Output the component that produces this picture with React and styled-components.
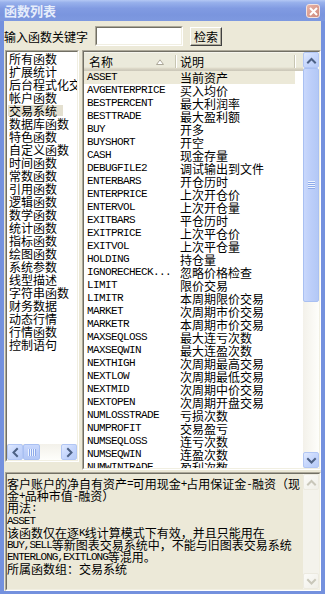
import React from 'react';
import styled, { createGlobalStyle } from 'styled-components';

const categories = [
  '所有函数', '扩展统计', '后台程式化交易', '帐户函数', '交易系统', '数据库函数', '特色函数',
  '自定义函数', '时间函数', '常数函数', '引用函数', '逻辑函数', '数学函数', '统计函数',
  '指标函数', '绘图函数', '系统参数', '线型描述', '字符串函数', '财务数据', '动态行情',
  '行情函数', '控制语句'
];

const functions = [
  ['ASSET', '当前资产'],
  ['AVGENTERPRICE', '买入均价'],
  ['BESTPERCENT', '最大利润率'],
  ['BESTTRADE', '最大盈利额'],
  ['BUY', '开多'],
  ['BUYSHORT', '开空'],
  ['CASH', '现金存量'],
  ['DEBUGFILE2', '调试输出到文件'],
  ['ENTERBARS', '开仓历时'],
  ['ENTERPRICE', '上次开仓价'],
  ['ENTERVOL', '上次开仓量'],
  ['EXITBARS', '平仓历时'],
  ['EXITPRICE', '上次平仓价'],
  ['EXITVOL', '上次平仓量'],
  ['HOLDING', '持仓量'],
  ['IGNORECHECK...', '忽略价格检查'],
  ['LIMIT', '限价交易'],
  ['LIMITR', '本周期限价交易'],
  ['MARKET', '次周期市价交易'],
  ['MARKETR', '本周期市价交易'],
  ['MAXSEQLOSS', '最大连亏次数'],
  ['MAXSEQWIN', '最大连盈次数'],
  ['NEXTHIGH', '次周期最高交易'],
  ['NEXTLOW', '次周期最低交易'],
  ['NEXTMID', '次周期中价交易'],
  ['NEXTOPEN', '次周期开盘交易'],
  ['NUMLOSSTRADE', '亏损次数'],
  ['NUMPROFIT', '交易盈亏'],
  ['NUMSEQLOSS', '连亏次数'],
  ['NUMSEQWIN', '连盈次数'],
  ['NUMWINTRADE', '盈利次数']
];

const Chevron = ({ dir, color }) => {
  const paths = {
    up: 'M4 9.5 L7.5 6 L11 9.5',
    down: 'M4 6 L7.5 9.5 L11 6',
    left: 'M9 4 L5.5 7.5 L9 11',
    right: 'M6 4 L9.5 7.5 L6 11'
  };
  return (
    <svg width="14" height="14" viewBox="0 0 14 14">
      <path d={paths[dir]} fill="none" stroke={color} strokeWidth="2" strokeLinecap="square" />
    </svg>
  );
};

const VScroll = ({ disabled, thumb }) => (
  <VBar $disabled={disabled}>
    <ScrollBtn $disabled={disabled}>
      <Chevron dir="up" color={disabled ? '#C9C7BA' : '#4D6185'} />
    </ScrollBtn>
    {thumb ? (
      <VThumb style={{ height: thumb }}>
        <Grip />
      </VThumb>
    ) : null}
    <Track />
    <ScrollBtn $disabled={disabled}>
      <Chevron dir="down" color={disabled ? '#C9C7BA' : '#4D6185'} />
    </ScrollBtn>
  </VBar>
);

export default function App() {
  return (
    <>
      <GlobalStyle />
      <Window>
        <TitleBar>
          <Title>函数列表</Title>
          <CloseBtn>
            <svg width="9" height="9" viewBox="0 0 9 9">
              <path d="M1 1 L8 8 M8 1 L1 8" stroke="#fff" strokeWidth="2" />
            </svg>
          </CloseBtn>
        </TitleBar>
        <Frame>
          <SearchRow>
            <label>输入函数关键字</label>
            <Sunken $w="88px" $h="20px">
              <Inset />
            </Sunken>
            <Button>检索</Button>
          </SearchRow>
          <Main>
            <Sunken $w="74px" $h="412px">
              <Inset $dir="column">
                <CategoryList>
                  {categories.map((c) => (
                    <Category key={c}>
                      <CategoryLabel $selected={c === '交易系统'}>{c}</CategoryLabel>
                    </Category>
                  ))}
                </CategoryList>
                <HBar>
                  <ScrollBtn>
                    <Chevron dir="left" color="#4D6185" />
                  </ScrollBtn>
                  <HThumb>
                    <Grip $horizontal />
                  </HThumb>
                  <Track />
                  <ScrollBtn>
                    <Chevron dir="right" color="#4D6185" />
                  </ScrollBtn>
                </HBar>
              </Inset>
            </Sunken>
            <Sunken $grow>
              <Inset>
                <ListContent>
                  <Header>
                    <HeaderCell $w="91px" $pad="5px">
                      名称
                      <SortArrow width="8" height="6" viewBox="0 0 8 6">
                        <polygon points="0.5,5.5 4,0.8 7.5,5.5" fill="#fff" stroke="#ACA899" strokeWidth="1" />
                      </SortArrow>
                    </HeaderCell>
                    <Divider />
                    <HeaderCell $w="117px" $pad="3px">说明</HeaderCell>
                    <Divider />
                  </Header>
                  {functions.map(([name, desc], i) => (
                    <Row key={name} $selected={i === 0}>
                      <NameCell>{name}</NameCell>
                      <DescCell>{desc}</DescCell>
                    </Row>
                  ))}
                </ListContent>
                <VScroll thumb={234} />
              </Inset>
            </Sunken>
          </Main>
          <Sunken $grow $mt="2px">
            <Inset $bg="#ECE9D8">
              <HelpText>
                <HelpLine>客户账户的净自有资产<L>=</L>可用现金<L>+</L>占用保证金<L>-</L>融资（现</HelpLine>
                <HelpLine>金<L>+</L>品种市值<L>-</L>融资）</HelpLine>
                <HelpLine>用法<L>:</L></HelpLine>
                <HelpLine><L>ASSET</L></HelpLine>
                <HelpLine>该函数仅在逐<L>K</L>线计算模式下有效，并且只能用在</HelpLine>
                <HelpLine><L>BUY,SELL</L>等新图表交易系统中，不能与旧图表交易系统</HelpLine>
                <HelpLine><L>ENTERLONG,EXITLONG</L>等混用。</HelpLine>
                <HelpLine>所属函数组：交易系统</HelpLine>
              </HelpText>
              <VScroll disabled />
            </Inset>
          </Sunken>
        </Frame>
      </Window>
    </>
  );
}

const GlobalStyle = createGlobalStyle`
  html, body {
    margin: 0;
    padding: 0;
    background: #ECE9D8;
  }
  body {
    font-family: "Noto Sans CJK SC", "Noto Sans", sans-serif;
    font-size: 12px;
    color: #000;
  }
  * {
    box-sizing: border-box;
  }
`;

const Window = styled.div`
  width: 325px;
  height: 594px;
  display: flex;
  flex-direction: column;
  background: #ECE9D8;
  overflow: hidden;
`;

const TitleBar = styled.div`
  height: 21px;
  flex: none;
  display: flex;
  align-items: center;
  justify-content: space-between;
  padding: 0 5px 0 4px;
  background: linear-gradient(180deg, #B4C8F4 0%, #98B1EC 12%, #819BE2 40%, #7A95DE 70%, #7E99E0 100%);
`;

const Title = styled.span`
  color: #E6EDFB;
  font-weight: bold;
  font-size: 13px;
  line-height: 21px;
`;

const CloseBtn = styled.div`
  width: 14px;
  height: 14px;
  display: flex;
  align-items: center;
  justify-content: center;
  border: 1px solid #F2E2DE;
  border-radius: 3px;
  background: linear-gradient(135deg, #E8B4A8 0%, #D8998C 60%, #CC8A7D 100%);
  margin-top: 1px;
`;

const Frame = styled.div`
  flex: 1;
  min-height: 0;
  display: flex;
  flex-direction: column;
  border: 4px solid #7491DE;
  border-top: none;
  border-bottom-width: 3px;
  padding-left: 1px;
`;

const SearchRow = styled.div`
  height: 29px;
  flex: none;
  display: flex;
  align-items: center;
  gap: 7px;
  padding-top: 1px;
  label {
    line-height: 13px;
    margin-left: -1px;
  }
`;

const Sunken = styled.div`
  display: flex;
  flex: ${(p) => (p.$grow ? 1 : 'none')};
  width: ${(p) => p.$w || 'auto'};
  height: ${(p) => p.$h || 'auto'};
  margin-top: ${(p) => p.$mt || 0};
  min-width: 0;
  min-height: 0;
  border: 1px solid;
  border-color: #ACA899 #FFFFFF #FFFFFF #ACA899;
`;

const Inset = styled.div`
  flex: 1;
  min-width: 0;
  min-height: 0;
  display: flex;
  flex-direction: ${(p) => p.$dir || 'row'};
  overflow: hidden;
  border: 1px solid;
  border-color: #716F64 #F1EFE2 #F1EFE2 #716F64;
  background: ${(p) => p.$bg || '#FFFFFF'};
`;

const Button = styled.div`
  width: 32px;
  height: 19px;
  display: flex;
  align-items: center;
  justify-content: center;
  border: 1px solid;
  border-color: #FFFFFF #404040 #404040 #FFFFFF;
  box-shadow: inset -1px -1px 0 #ACA899;
  background: #ECE9D8;
  line-height: 13px;
`;

const Main = styled.div`
  height: 420px;
  flex: none;
  display: flex;
  align-items: flex-start;
  gap: 3px;
  & > :last-child {
    align-self: stretch;
  }
`;

const CategoryList = styled.div`
  flex: 1;
  overflow: hidden;
`;

const Category = styled.div`
  height: 13px;
  display: flex;
  align-items: center;
  padding-left: 1px;
  white-space: nowrap;
`;

const CategoryLabel = styled.span`
  height: 11px;
  line-height: 11px;
  padding: 0 6px 0 1px;
  background: ${(p) => (p.$selected ? '#E4E0D0' : 'transparent')};
`;

const ListContent = styled.div`
  flex: 1;
  min-width: 0;
  overflow: hidden;
`;

const Header = styled.div`
  height: 19px;
  display: flex;
  align-items: center;
  background: linear-gradient(180deg, #FFFFFF 0, #EBEADB 1px, #EBEADB 15px, #E2DECD 16px, #D6D2C2 17px, #CBC7B8 19px);
`;

const HeaderCell = styled.div`
  width: ${(p) => p.$w};
  height: 19px;
  display: flex;
  align-items: center;
  padding-left: ${(p) => p.$pad};
  line-height: 13px;
`;

const SortArrow = styled.svg`
  margin-left: auto;
  margin-right: 11px;
`;

const Divider = styled.div`
  width: 2px;
  height: 13px;
  border-left: 1px solid #C7C5B2;
  border-right: 1px solid #FFFFFF;
`;

const Row = styled.div`
  width: 211px;
  height: 13px;
  display: flex;
  align-items: center;
  background: ${(p) => (p.$selected ? '#ECE9D8' : 'transparent')};
`;

const NameCell = styled.div`
  width: 92px;
  padding-left: 3px;
  font-family: "Liberation Mono", monospace;
  font-size: 11px;
  letter-spacing: -0.6px;
  line-height: 13px;
  white-space: nowrap;
`;

const DescCell = styled.div`
  padding-left: 4px;
  line-height: 13px;
  white-space: nowrap;
`;

const VBar = styled.div`
  width: 16px;
  flex: none;
  display: flex;
  flex-direction: column;
  background: ${(p) => (p.$disabled ? '#F4F3EC' : 'linear-gradient(90deg, #F3F1EA, #FEFEFB)')};
`;

const HBar = styled.div`
  height: 16px;
  flex: none;
  display: flex;
  background: linear-gradient(180deg, #F3F1EA, #FEFEFB);
`;

const ScrollBtn = styled.div`
  width: 16px;
  height: 16px;
  flex: none;
  display: flex;
  align-items: center;
  justify-content: center;
  border: 1px solid ${(p) => (p.$disabled ? '#ECEAE0' : '#B2C6F4')};
  border-radius: 2px;
  background: ${(p) =>
    p.$disabled
      ? 'linear-gradient(135deg, #FBFBF8 0%, #F0EFE8 100%)'
      : 'linear-gradient(135deg, #E1EAFE 0%, #C8D8FD 45%, #B6CAF7 100%)'};
`;

const VThumb = styled.div`
  flex: none;
  display: flex;
  align-items: center;
  justify-content: center;
  border: 1px solid #A9C0F2;
  border-radius: 2px;
  background: linear-gradient(90deg, #C9D8FC 0%, #BCCEF9 50%, #B3C8F6 100%);
`;

const HThumb = styled.div`
  width: 17px;
  flex: none;
  display: flex;
  align-items: center;
  justify-content: center;
  border: 1px solid #A9C0F2;
  border-radius: 2px;
  background: linear-gradient(180deg, #C9D8FC 0%, #BCCEF9 50%, #B3C8F6 100%);
`;

const Grip = styled.div`
  width: ${(p) => (p.$horizontal ? '8px' : '7px')};
  height: ${(p) => (p.$horizontal ? '7px' : '8px')};
  background: repeating-linear-gradient(
    ${(p) => (p.$horizontal ? '90deg' : '180deg')},
    #EEF4FE 0 1px,
    #8DAAEA 1px 2px
  );
`;

const Track = styled.div`
  flex: 1;
`;

const HelpText = styled.div`
  flex: 1;
  min-width: 0;
  padding-top: 4px;
  overflow: hidden;
`;

const HelpLine = styled.div`
  height: 12.2px;
  line-height: 12.2px;
  display: flex;
  align-items: center;
  white-space: nowrap;
`;

const L = styled.span`
  font-family: "Liberation Mono", monospace;
  font-size: 11px;
  letter-spacing: -1px;
`;
